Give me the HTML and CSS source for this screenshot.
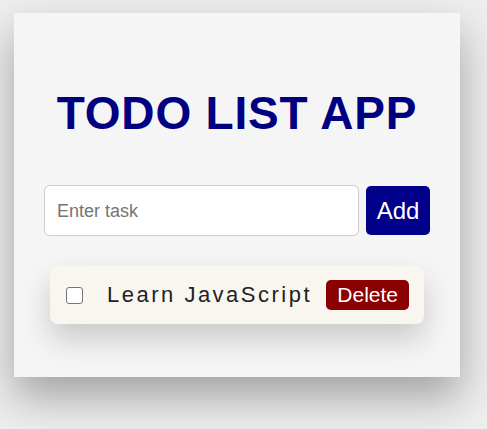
FILE: index.html
```html
<!DOCTYPE html>
<html>
<head>
<meta charset="utf-8">
<link rel="stylesheet" href="styles.css">
</head>
<body>
<div class="card">
  <h1 class="title">TODO LIST APP</h1>
  <div class="form">
    <input class="task-input" type="text" placeholder="Enter task">
    <button class="add-btn">Add</button>
  </div>
  <ul class="list">
    <li class="item">
      <input class="check" type="checkbox">
      <span class="label">Learn JavaScript</span>
      <button class="del-btn">Delete</button>
    </li>
  </ul>
</div>
</body>
</html>
```
FILE: styles.css
```css
html, body {
  margin: 0;
  padding: 0;
}
body {
  background: #eeeeee;
  font-family: "Liberation Sans", Arial, sans-serif;
  height: 429px;
  overflow: hidden;
}
.card {
  margin: 13px 0 0 14px;
  width: 446px;
  height: 364px;
  box-sizing: border-box;
  background: #f5f5f5;
  padding: 74px 30px 0 30px;
  box-shadow: 0 20px 40px rgba(0, 0, 0, 0.32);
}
.title {
  margin: 0 0 45px 0;
  font-size: 46px;
  line-height: 53px;
  font-weight: bold;
  color: #000080;
  text-align: center;
  letter-spacing: 0.8px;
}
.form {
  display: flex;
  align-items: center;
  gap: 7px;
  height: 51px;
}
.task-input {
  flex: 1;
  height: 51px;
  box-sizing: border-box;
  border: 1px solid #cccccc;
  border-radius: 6px;
  background: #ffffff;
  padding: 2px 12px 0 12px;
  font-family: "Liberation Sans", Arial, sans-serif;
  font-size: 18px;
  color: #222;
  outline: none;
}
.task-input::placeholder {
  color: #757575;
}
.add-btn {
  width: 64px;
  height: 49px;
  border: none;
  border-radius: 5px;
  background: #00008b;
  color: #ffffff;
  font-family: "Liberation Sans", Arial, sans-serif;
  font-size: 24px;
  padding: 0;
}
.list {
  list-style: none;
  margin: 30px 6px 0 6px;
  padding: 0;
}
.item {
  display: flex;
  align-items: center;
  height: 58px;
  box-sizing: border-box;
  padding: 0 15px 0 16px;
  background: #f9f6ef;
  border-radius: 8px;
  box-shadow: 0 15px 30px rgba(0, 0, 0, 0.18);
}
.check {
  appearance: none;
  -webkit-appearance: none;
  margin: 0 24px 0 0;
  width: 17px;
  height: 17px;
  box-sizing: border-box;
  border: 1.5px solid #767676;
  border-radius: 3px;
  background: #ffffff;
}
.label {
  flex: 1;
  font-size: 22px;
  letter-spacing: 2.5px;
  color: #222222;
}
.del-btn {
  border: none;
  border-radius: 5px;
  background: #8b0000;
  color: #ffffff;
  font-family: "Liberation Sans", Arial, sans-serif;
  font-size: 21px;
  line-height: 24px;
  padding: 3px 11px;
  height: 30px;
}
```
